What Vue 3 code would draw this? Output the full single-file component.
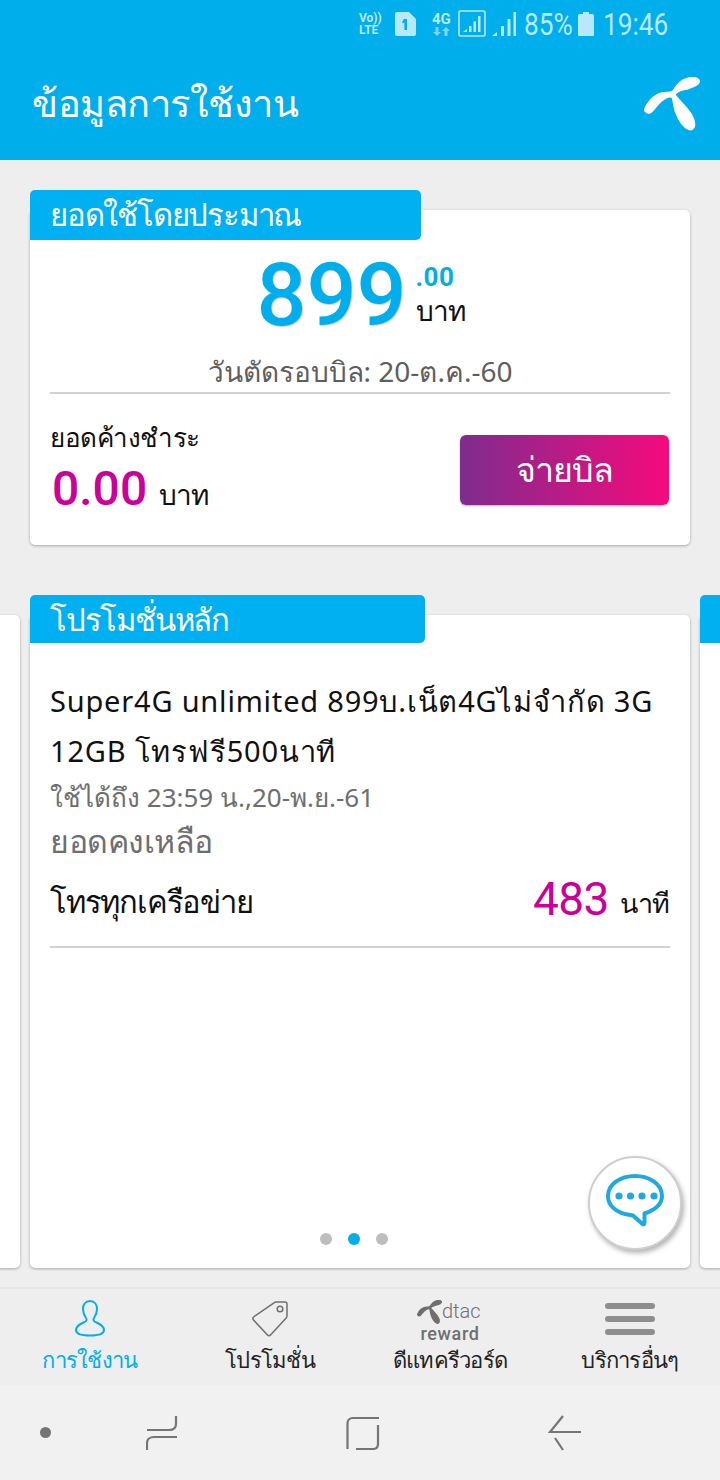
<template>
  <div class="screen">
    <header class="topbar">
      <div class="status">
        <div class="volte">Vo))<br />LTE</div>
        <svg class="sim" width="22" height="24" viewBox="0 0 22 24">
          <path d="M2 0h12l7 7v15a2 2 0 0 1-2 2H2a2 2 0 0 1-2-2V2a2 2 0 0 1 2-2z" fill="#b8e8fb" />
          <path d="M9 7h3v11H9.400V10.500L7.500 11.500V9.200z" fill="#00aeeb" />
        </svg>
        <div class="net">4G<svg width="19" height="9" viewBox="0 0 19 9"><path d="M5 9 1 5h2.500V0h3v5H9zM14 0l4 4h-2.500v5h-3V4H10z" fill="#7fd3f3" /></svg></div>
        <svg class="sig-box" width="28" height="27" viewBox="0 0 28 27">
          <rect x="1" y="1" width="26" height="25" rx="1.500" fill="none" stroke="#b8e8fb" stroke-width="1.600" />
          <path d="M5 22l4-3v3zM11 22v-6h2.500v6zM15.500 22V11.500H18V22zM20 22V6h2.500v16z" fill="#b8e8fb" />
        </svg>
        <svg class="sig" width="24" height="24" viewBox="0 0 24 24">
          <path d="M0 24l5-4v4zM9 24V14h3v10zM15.500 24V7h3v17zM21.500 24V0H24v24z" fill="#b8e8fb" />
        </svg>
        <span class="pct">85%</span>
        <svg class="batt" width="16" height="24" viewBox="0 0 16 24">
          <path d="M5 0h6v2h3.500A1.500 1.500 0 0 1 16 3.500V23a1 1 0 0 1-1 1H1a1 1 0 0 1-1-1V3.500A1.500 1.500 0 0 1 1.500 2H5z" fill="#b8e8fb" />
        </svg>
        <span class="time">19:46</span>
      </div>
      <div class="titlebar">
        <h1>ข้อมูลการใช้งาน</h1>
        <svg width="56" height="54" viewBox="0 0 56 54">
          <path :d="logoPath" fill="#fff" stroke="#fff" stroke-width="3.500" stroke-linejoin="round" />
        </svg>
      </div>
    </header>

    <main class="content">
      <section class="card bill">
        <div class="tab tab-bill">ยอดใช้โดยประมาณ</div>
        <div class="amount">
          <span class="big">899</span>
          <div class="side">
            <span class="cents">.00</span>
            <span class="baht">บาท</span>
          </div>
        </div>
        <div class="cutoff">วันตัดรอบบิล: 20-ต.ค.-60</div>
        <div class="pay-row">
          <div>
            <div class="due-label">ยอดค้างชำระ</div>
            <div class="due"><span class="due-num">0.00</span><span class="baht">บาท</span></div>
          </div>
          <button class="pay">จ่ายบิล</button>
        </div>
      </section>

      <div class="carousel">
        <section class="card slide"></section>
        <section class="card slide main-slide">
          <div class="tab tab-promo">โปรโมชั่นหลัก</div>
          <div class="promo-body">
            <div class="promo-name">Super4G unlimited 899บ.เน็ต4Gไม่จำกัด 3G 12GB โทรฟรี500นาที</div>
            <div class="promo-date">ใช้ได้ถึง 23:59 น.,20-พ.ย.-61</div>
            <div class="remain">ยอดคงเหลือ</div>
            <div class="usage">
              <span class="usage-name">โทรทุกเครือข่าย</span>
              <span class="usage-val"><b>483</b> นาที</span>
            </div>
          </div>
          <div class="dots">
            <i v-for="n in 3" :key="n" :class="{ on: n === 2 }"></i>
          </div>
          <button class="chat" aria-label="chat">
            <svg width="60" height="60" viewBox="0 0 60 60">
              <path d="M30 3C15 3 3 11.500 3 23c0 9 7 15.500 17 18l8 1.500 9.500 8.500c1 .8 2 .3 2-1v-9.500C50 37 57 31 57 23 57 11.500 45 3 30 3z" fill="none" stroke="#1fa9e1" stroke-width="4" stroke-linejoin="round" />
              <circle cx="14" cy="23" r="3.600" fill="#1fa9e1" />
              <circle cx="25.500" cy="23" r="3.600" fill="#1fa9e1" />
              <circle cx="37" cy="23" r="3.600" fill="#1fa9e1" />
              <circle cx="49" cy="23" r="3.600" fill="#1fa9e1" />
            </svg>
          </button>
        </section>
        <section class="card slide"><div class="tab tab-promo"></div></section>
      </div>
    </main>

    <nav class="tabs">
      <div class="tabitem active">
        <svg width="32" height="38" viewBox="0 0 32 38" fill="none" stroke="#00aeeb" stroke-width="2">
          <path d="M16 1c-4.500 0-7 3.500-7 8 0 4 1.500 7 3 9 .8 1 .8 2.500-.5 3.500C8 23.500 2 25 2 30c0 4 4 5.500 14 5.500S30 34 30 30c0-5-6-6.500-9.500-8.500-1.300-1-1.300-2.500-.5-3.500 1.500-2 3-5 3-9 0-4.500-2.500-8-7-8z" />
        </svg>
        <span>การใช้งาน</span>
      </div>
      <div class="tabitem">
        <svg width="38" height="38" viewBox="0 0 38 38" fill="none" stroke="#6f6f6f" stroke-width="1.500" stroke-linejoin="round">
          <path d="M25 2h9a2 2 0 0 1 2 2v12a3 3 0 0 1-.8 2L19.500 35a2 2 0 0 1-3 0L2.500 20a2 2 0 0 1 0-3L23 2.800A3 3 0 0 1 25 2z" />
          <circle cx="29" cy="9" r="2.800" />
        </svg>
        <span>โปรโมชั่น</span>
      </div>
      <div class="tabitem">
        <div class="reward">
          <div class="reward-top">
            <svg width="25" height="24" viewBox="0 0 56 54"><path :d="logoPath" fill="#6f6f6f" stroke="#6f6f6f" stroke-width="4" stroke-linejoin="round" /></svg>
            <span>dtac</span>
          </div>
          <div class="reward-bottom">reward</div>
        </div>
        <span>ดีแทครีวอร์ด</span>
      </div>
      <div class="tabitem">
        <div class="burger"><i></i><i></i><i></i></div>
        <span>บริการอื่นๆ</span>
      </div>
    </nav>

    <div class="sysnav">
      <span class="sysdot"></span>
      <svg width="32" height="36" viewBox="0 0 32 36" fill="none" stroke="#757575" stroke-width="2.200">
        <path d="M1 15h22c4 0 7-2 7-6V1M31 22H8c-4 0-7 2-7 6v7" />
      </svg>
      <svg width="34" height="34" viewBox="0 0 34 34" fill="none" stroke="#757575" stroke-width="2.200">
        <path d="M33 2H7C3.500 2 1.500 4 1.500 7.500V33M32 9v19c0 3.500-2 5-5 5H10" />
      </svg>
      <svg width="34" height="36" viewBox="0 0 34 36" fill="none" stroke="#757575" stroke-width="2.200">
        <path d="M33 17H2L15 1M7 23l8 12" />
      </svg>
    </div>
  </div>
</template>

<script setup>
const logoPath = 'M1.500 33C4 26 10 19 18 17c4-1 9 0 11.500-2C32 12 35 5 42 3c5-2 10-2 12 .5 1.500 3-5 5.500-10 7-5 1.500-12 2-14 7 0 2 3 4 7 9 6 6 12 14 12.500 20 .5 3.500-2 6-4.500 5-5-2-9.500-9-12.500-17-2-6-2-12-3.500-15-2.500-1.500-7.500 0-12.500 4-4 3-8.500 11-11 11.500-2.500.5-3.500-1.500-3-3z'
</script>

<style>
html, body { margin: 0; background: #eee; }
</style>

<style scoped>
.screen {
  width: 720px;
  height: 1480px;
  overflow: hidden;
  display: flex;
  flex-direction: column;
  background: #eee;
  font-family: "Noto Sans", Roboto, "Noto Sans CJK SC", sans-serif;
  color: #111;
}
.topbar {
  height: 160px;
  flex-shrink: 0;
  background: #00aeeb;
}
.status {
  height: 47px;
  display: flex;
  align-items: center;
  padding-left: 359px;
  color: #b8e8fb;
  font-family: Roboto, sans-serif;
}
.volte {
  width: 24px;
  font-size: 12px;
  line-height: 12px;
  font-weight: 700;
  margin-right: 12px;
}
.sim { margin-right: 15px; }
.net {
  width: 20px;
  display: flex;
  flex-direction: column;
  font-size: 15px;
  line-height: 15px;
  font-weight: 700;
  margin-right: 6px;
}
.sig-box { margin-right: 6px; }
.sig { margin-right: 8px; }
.pct, .time {
  font-size: 32px;
  display: inline-block;
  transform-origin: left center;
  transform: scaleX(.82);
}
.pct { width: 54px; }
.batt { margin-right: 9px; }
.titlebar {
  height: 113px;
  display: flex;
  justify-content: space-between;
  align-items: center;
  padding: 0 20px 0 32px;
  color: #fff;
}
h1 {
  margin: 0;
  font-size: 38px;
  font-weight: 400;
  letter-spacing: -.5px;
}
.content {
  flex: 1;
  padding-top: 50px;
}
.card {
  background: #fff;
  border-radius: 5px;
  box-shadow: 0 1px 3px rgba(0, 0, 0, .3);
}
.bill {
  display: flow-root;
  width: 660px;
  height: 335px;
  margin: 0 30px;
  box-sizing: border-box;
}
.tab {
  background: #00b0f0;
  color: #fff;
  border-radius: 5px;
  border-bottom-left-radius: 0;
  margin-top: -20px;
  box-sizing: border-box;
  padding-left: 20px;
  font-size: 31px;
  letter-spacing: -1.200px;
  line-height: 48px;
  white-space: nowrap;
  overflow: hidden;
}
.tab-bill { width: 391px; height: 50px; }
.tab-promo { width: 395px; height: 48px; }
.amount {
  display: flex;
  justify-content: center;
  align-items: center;
  height: 100px;
  color: #00aeeb;
  padding: 9px 0 0 1px;
  box-sizing: border-box;
}
.big {
  font-size: 88px;
  line-height: 91px;
  font-weight: 500;
  font-family: Roboto, sans-serif;
  text-shadow: 1px 1px 1px rgba(0, 0, 0, .2);
}
.side {
  display: flex;
  flex-direction: column;
  margin-left: 9px;
  padding-top: 1px;
}
.cents {
  font-size: 26px;
  line-height: 30px;
  font-weight: 700;
  font-family: Roboto, sans-serif;
  letter-spacing: .5px;
}
.baht {
  font-size: 28px;
  line-height: 36px;
  letter-spacing: -1px;
  color: #111;
}
.cutoff {
  margin: 0 20px;
  height: 54px;
  line-height: 62px;
  text-align: center;
  font-size: 28px;
  color: #5e5e5e;
  border-bottom: 2px solid #d2d2d2;
  box-sizing: border-box;
}
.pay-row {
  display: flex;
  justify-content: space-between;
  padding: 24px 21px 0 20px;
}
.due-label { font-size: 26px; line-height: 38px; letter-spacing: -.5px; }
.due { line-height: 66px; }
.due-num {
  font-size: 48px;
  font-weight: 500;
  color: #cc0099;
  font-family: Roboto, sans-serif;
  margin: 0 12px 0 2px;
}
.pay {
  width: 209px;
  height: 70px;
  margin-top: 17px;
  border: 0;
  border-radius: 6px;
  background: linear-gradient(90deg, #7e2c8e, #f60a7c);
  color: #fff;
  font: inherit;
  font-size: 34px;
  letter-spacing: -1px;
  box-shadow: 0 1px 2px rgba(0, 0, 0, .3);
}
.carousel {
  display: flex;
  justify-content: center;
  gap: 10px;
  margin-top: 50px;
  padding: 20px 0 3px;
  overflow: hidden;
}
.slide {
  flex: 0 0 660px;
  height: 653px;
}
.main-slide {
  position: relative;
}
.promo-body {
  padding: 33px 20px 0;
}
.promo-name {
  font-size: 29px;
  letter-spacing: .8px;
  line-height: 50px;
}
.promo-date {
  font-size: 26px;
  line-height: 42px;
  color: #6e6e6e;
}
.remain {
  font-size: 32px;
  line-height: 46px;
  letter-spacing: -.5px;
  color: #6e6e6e;
}
.usage {
  display: flex;
  justify-content: space-between;
  align-items: baseline;
  font-size: 31px;
  height: 84px;
  line-height: 66px;
  border-bottom: 2px solid #d2d2d2;
  box-sizing: border-box;
}
.usage-name { letter-spacing: -1.200px; }
.usage-val { font-size: 27px; letter-spacing: -.5px; }
.usage-val b {
  font-size: 46px;
  font-weight: 400;
  color: #cc0099;
  font-family: Roboto, sans-serif;
  margin-right: 5px;
  position: relative;
  top: 2px;
}
.dots {
  position: absolute;
  left: 0;
  right: 12px;
  bottom: 23px;
  display: flex;
  justify-content: center;
  gap: 16px;
}
.dots i {
  width: 12px;
  height: 12px;
  border-radius: 50%;
  background: #bdbdbd;
}
.dots i.on { background: #00aeeb; }
.chat {
  position: absolute;
  right: 8px;
  top: 541px;
  width: 94px;
  height: 94px;
  padding: 0;
  border-radius: 50%;
  border: 2px solid #cfcfcf;
  background: #fff;
  box-shadow: 2px 3px 5px rgba(0, 0, 0, .3);
  display: flex;
  align-items: center;
  justify-content: center;
}
.tabs {
  height: 98px;
  flex-shrink: 0;
  display: grid;
  grid-template-columns: repeat(4, 180px);
  background: #eee;
  border-top: 2px solid #e6e6e6;
  box-sizing: border-box;
}
.tabitem {
  display: flex;
  flex-direction: column;
  align-items: center;
  padding-top: 11px;
  color: #222;
  font-size: 22px;
  letter-spacing: -.7px;
}
.tabitem > svg, .reward, .burger { height: 38px; }
.tabitem > span { line-height: 42px; white-space: nowrap; }
.active { color: #00aeeb; }
.reward { width: 66px; color: #6f6f6f; font-family: Roboto, sans-serif; letter-spacing: 0; }
.reward-top {
  display: flex;
  align-items: center;
  height: 23px;
  font-size: 20px;
  font-weight: 300;
  line-height: 23px;
}
.reward-top svg { flex-shrink: 0; }
.reward-bottom {
  font-size: 18px;
  font-weight: 500;
  line-height: 21px;
  letter-spacing: .6px;
  text-align: center;
}
.burger {
  width: 50px;
  display: flex;
  flex-direction: column;
  justify-content: center;
  gap: 7px;
}
.burger i {
  height: 6px;
  border-radius: 3px;
  background: #8e8e8e;
}
.sysnav {
  height: 95px;
  flex-shrink: 0;
  background: #f1f1f1;
  display: flex;
  align-items: center;
  padding-left: 40px;
}
.sysdot {
  width: 11px;
  height: 11px;
  border-radius: 50%;
  background: #757575;
  margin-right: 95px;
}
.sysnav svg:nth-of-type(1) { margin-right: 168px; }
.sysnav svg:nth-of-type(2) { margin-right: 168px; }
</style>
